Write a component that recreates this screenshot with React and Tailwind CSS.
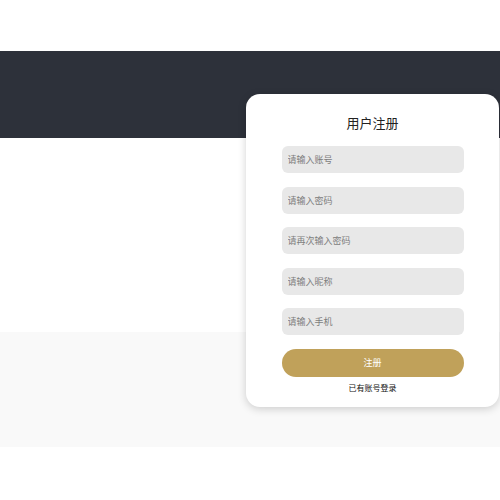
import React, { useState } from 'react';

const cjk = "font-['Noto_Sans_CJK_SC','Noto_Sans',sans-serif]";

function Field({ placeholder, type = 'text', value, onChange }) {
  return (
    <input
      type={type}
      value={value}
      onChange={(e) => onChange(e.target.value)}
      placeholder={placeholder}
      className="h-[27px] w-full rounded-[6px] bg-[#e8e8e8] px-[6px] text-[9px] text-[#333] outline-none placeholder:text-[#7d7d7d]"
    />
  );
}

function App() {
  const [account, setAccount] = useState('');
  const [password, setPassword] = useState('');
  const [confirm, setConfirm] = useState('');
  const [nickname, setNickname] = useState('');
  const [phone, setPhone] = useState('');

  return (
    <div className={`relative min-h-[500px] bg-white ${cjk}`}>
      <div className="h-[51px]" />
      <div className="h-[87px] bg-[#2d313a]" />
      <div className="h-[194px] bg-white" />
      <div className="h-[115px] bg-[#f9f9f9]" />

      <div className="absolute left-[246px] top-[94px] flex w-[253px] flex-col items-center rounded-[14px] bg-white pb-[13px] pt-[19px] shadow-[0_2px_8px_rgba(0,0,0,0.18)]">
        <h2 className="text-[13px] leading-[20px] text-[#222]">用户注册</h2>
        <div className="mt-[13px] flex w-[182px] flex-col gap-[13.5px]">
          <Field placeholder="请输入账号" value={account} onChange={setAccount} />
          <Field placeholder="请输入密码" type="password" value={password} onChange={setPassword} />
          <Field placeholder="请再次输入密码" type="password" value={confirm} onChange={setConfirm} />
          <Field placeholder="请输入昵称" value={nickname} onChange={setNickname} />
          <Field placeholder="请输入手机" value={phone} onChange={setPhone} />
        </div>
        <button
          type="button"
          className="mt-[14px] h-[28px] w-[182px] rounded-full bg-[#c0a15a] text-[9px] text-white"
        >
          注册
        </button>
        <a href="#login" className="mt-[5px] text-[8px] leading-[12px] text-[#111]">
          已有账号登录
        </a>
      </div>
    </div>
  );
}

export default App;
